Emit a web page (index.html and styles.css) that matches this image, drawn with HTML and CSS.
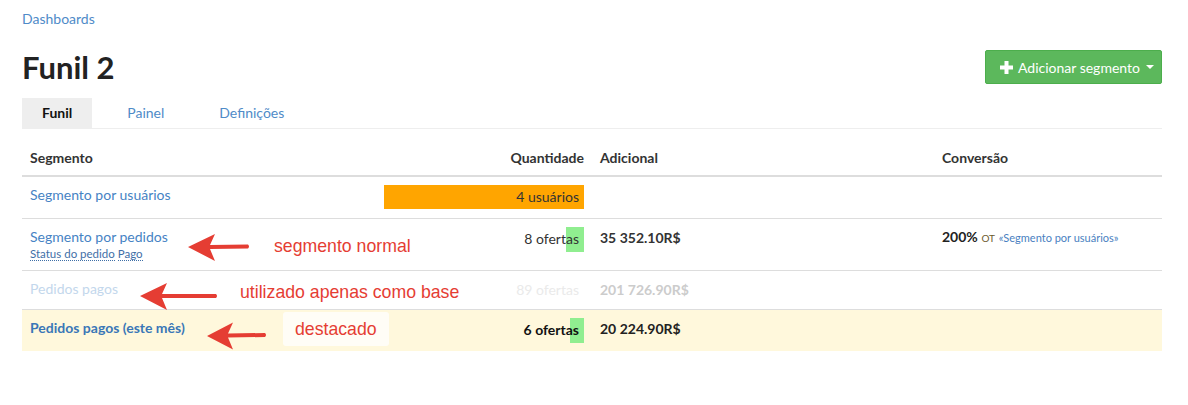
FILE: index.html
```html
<!DOCTYPE html>
<html lang="pt">
<head>
<meta charset="utf-8">
<title>Funil 2</title>
<link rel="stylesheet" href="styles.css">
</head>
<body>
<div class="page">
  <div class="breadcrumb"><a href="#">Dashboards</a></div>
  <div class="header">
    <h1 class="title">Funil 2</h1>
    <button class="btn-add" type="button">
      <svg class="plus" width="13" height="13" viewBox="0 0 13 13"><rect x="4.5" y="0" width="4" height="13" fill="#fff"/><rect x="0" y="4.5" width="13" height="4" fill="#fff"/></svg>
      <span class="btn-label">Adicionar segmento</span>
      <span class="caret"></span>
    </button>
  </div>
  <ul class="tabs">
    <li class="tab active">Funil</li>
    <li class="tab">Painel</li>
    <li class="tab">Definições</li>
  </ul>
  <table class="funnel">
    <colgroup>
      <col class="c1"><col class="c2"><col class="c3"><col class="c4">
    </colgroup>
    <thead>
      <tr>
        <th>Segmento</th>
        <th class="num">Quantidade</th>
        <th>Adicional</th>
        <th>Conversão</th>
      </tr>
    </thead>
    <tbody>
      <tr>
        <td><a class="seg" href="#">Segmento por usuários</a></td>
        <td class="num">
          <div class="stack">
            <div class="bar orange" style="width:200px"></div>
            <div class="qty">4 usuários</div>
          </div>
        </td>
        <td></td>
        <td></td>
      </tr>
      <tr>
        <td>
          <a class="seg" href="#">Segmento por pedidos</a>
          <div class="sub"><span class="dotted">Status do pedido</span> <span class="dotted">Pago</span></div>
        </td>
        <td class="num">
          <div class="stack">
            <div class="bar green" style="width:18px"></div>
            <div class="qty">8 ofertas</div>
          </div>
        </td>
        <td class="money">35 352.10R$</td>
        <td class="conv"><b>200%</b> <span class="ot">от</span> <span class="ref">«Segmento por usuários»</span></td>
      </tr>
      <tr class="faded">
        <td><a class="seg" href="#">Pedidos pagos</a></td>
        <td class="num">
          <div class="stack short">
            <div class="qty">89 ofertas</div>
          </div>
        </td>
        <td class="money">201 726.90R$</td>
        <td></td>
      </tr>
      <tr class="highlight">
        <td><a class="seg strong" href="#">Pedidos pagos (este mês)</a></td>
        <td class="num">
          <div class="stack">
            <div class="bar green" style="width:14px"></div>
            <div class="qty strong">6 ofertas</div>
          </div>
        </td>
        <td class="money">20 224.90R$</td>
        <td></td>
      </tr>
    </tbody>
  </table>
</div>

<div class="note n1">segmento normal</div>
<div class="note n2">utilizado apenas como base</div>
<div class="note n3 boxed">destacado</div>

<svg class="arrow a1" width="64" height="30" viewBox="0 0 64 30"><path d="M0 14 L27 1 L22 12 L60 11.5 Q62 13.5 60 15.5 L22 16 L27 28 Z" fill="#e53d33"/></svg>
<svg class="arrow a2" width="80" height="30" viewBox="0 0 80 30"><path d="M0 14 L27 1 L22 12 L76 12 Q78 14 76 16 L22 16 L27 28 Z" fill="#e53d33"/></svg>
<svg class="arrow a3" width="62" height="30" viewBox="0 0 62 30"><path d="M0 15 L26 1.5 L21 12.5 L58 12 Q60 14 58 16 L21 16.5 L26 28.5 Z" fill="#e53d33"/></svg>
</body>
</html>
```

FILE: styles.css
```css
* { box-sizing: border-box; }

body {
  margin: 0;
  background: #fff;
  font-family: Lato, "Liberation Sans", Arial, sans-serif;
  font-size: 14px;
  color: #333;
}

a { text-decoration: none; color: #4683c4; }

.page {
  width: 1188px;
  padding: 10px 26px 0 22px;
}

.breadcrumb {
  font-size: 14px;
  line-height: 18px;
}
.breadcrumb a { color: #4f8bc8; }

.header {
  display: flex;
  align-items: center;
  justify-content: space-between;
  margin-top: 22px;
}

.title {
  margin: 0;
  font-size: 31px;
  font-weight: 700;
  color: #222;
  line-height: 34px;
}

.btn-add {
  display: flex;
  align-items: center;
  gap: 4px;
  height: 34px;
  width: 177px;
  padding: 0 12px 0 14px;
  background: #5cb85c;
  border: 1px solid #4cae4c;
  border-radius: 2px;
  color: #fff;
  font-family: inherit;
  font-size: 14px;
  white-space: nowrap;
}
.btn-label { font-size: 14px; }
.btn-add .plus { margin-right: 1px; flex: none; }
.caret {
  display: inline-block;
  width: 0;
  height: 0;
  margin-left: 2px;
  border-top: 4px solid #fff;
  border-left: 4px solid transparent;
  border-right: 4px solid transparent;
}

.tabs {
  list-style: none;
  margin: 14px 0 0;
  padding: 0;
  display: flex;
  gap: 15px;
  border-bottom: 1px solid #eee;
}
.tab {
  height: 30px;
  line-height: 30px;
  padding: 0 20px;
  color: #4f8bc8;
  font-size: 14px;
}
.tab.active {
  background: #eee;
  color: #111;
  font-weight: 700;
}

.funnel {
  width: 1140px;
  margin-top: 11px;
  border-collapse: collapse;
  table-layout: fixed;
}
.c1 { width: 354px; }
.c2 { width: 216px; }
.c3 { width: 342px; }
.c4 { width: 228px; }

.funnel th {
  text-align: left;
  font-weight: 700;
  color: #333;
  padding: 8px;
  line-height: 19px;
  border-bottom: 2px solid #ddd;
}
.funnel td {
  padding: 8px;
  vertical-align: top;
  border-top: 1px solid #ddd;
  line-height: 19px;
}
.funnel tbody tr:first-child td { border-top: 0; }
.funnel .num { text-align: right; }

.seg { color: #4683c4; }
.seg.strong { font-weight: 700; color: #3a77b7; }

.sub {
  font-size: 11.5px;
  line-height: 16px;
}
.dotted {
  color: #3f6fa7;
  border-bottom: 1px dotted #3f6fa7;
}

.stack {
  display: grid;
  height: 25px;
}
.stack.short { height: 22px; }
.stack > * { grid-area: 1 / 1; }
.bar { justify-self: end; height: 25px; }
.bar.orange { background: #ffa500; height: 24px; }
.bar.green { background: #90ee90; }
.qty {
  align-self: center;
  justify-self: end;
  padding-right: 5px;
  color: #333;
  line-height: 19px;
  position: relative;
  top: -1px;
}
.qty.strong { font-weight: 700; color: #111; }

.money {
  font-weight: 700;
  color: #333;
  padding-top: 9px !important;
}

.conv { padding-top: 8px !important; }
.conv b { color: #222; font-size: 14px; }
.ot { font-size: 10px; text-transform: uppercase; color: #6b5a2e; }
.ref { font-size: 11px; color: #4a7fc1; }

.faded .seg { color: #c3d7ec; }
.faded .qty { color: #eaeaea; }
.faded .money { color: #cccccc; }

.highlight td { background: #fff8dc; }
.highlight .money { color: #222; }

.note {
  position: absolute;
  font-family: "Liberation Sans", Arial, sans-serif;
  font-size: 17.7px;
  color: #e53d33;
  line-height: 22px;
}
.n1 { left: 274px; top: 235px; }
.n2 { left: 240px; top: 281px; }
.n3 { left: 283px; top: 312px; }
.boxed {
  background: rgba(255, 255, 255, 0.75);
  border-radius: 3px;
  padding: 6px 12px;
  height: 34px;
  width: 106px;
}

.arrow { position: absolute; }
.a1 { left: 188px; top: 233px; }
.a2 { left: 140px; top: 282px; }
.a3 { left: 207px; top: 321px; }
```
